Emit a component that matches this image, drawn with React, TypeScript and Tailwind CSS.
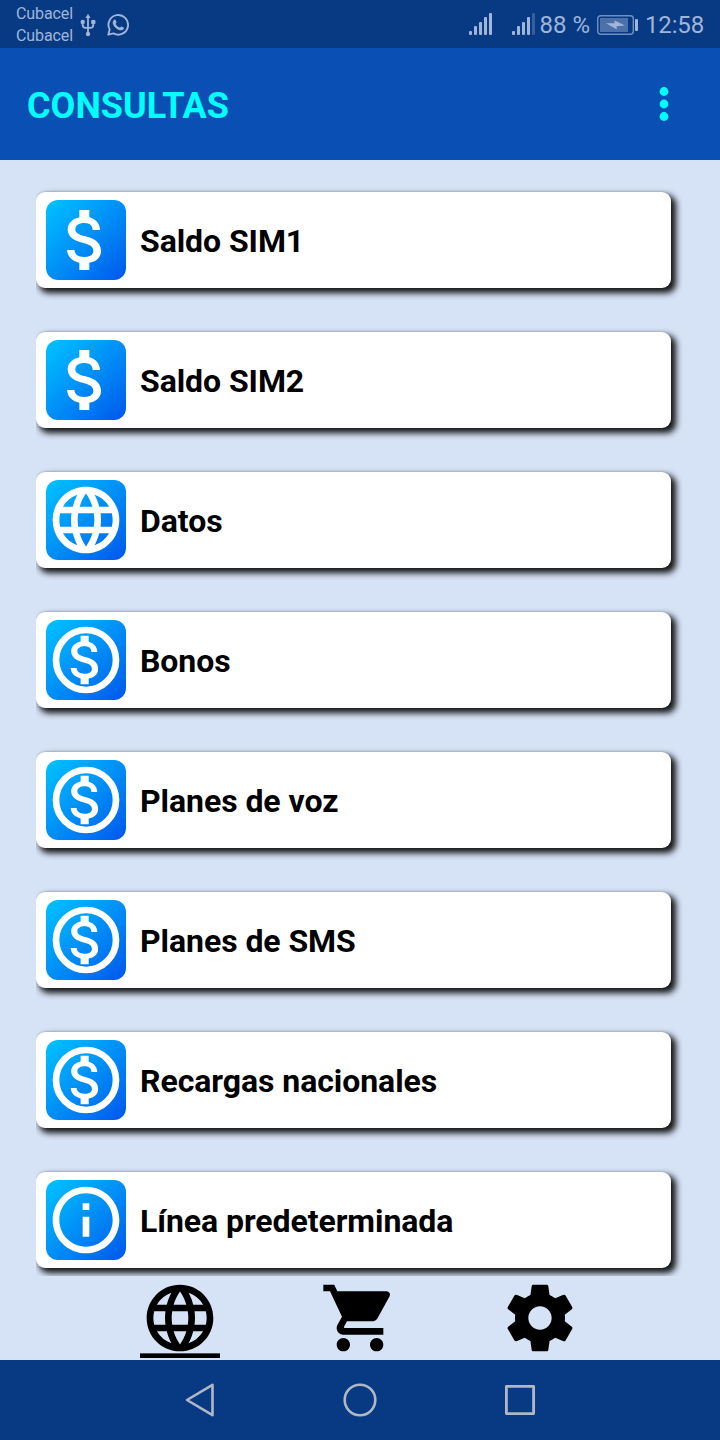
import type { ReactNode } from 'react'
import {
  MdAttachMoney,
  MdLanguage,
  MdOutlineInfo,
  MdShoppingCart
} from 'react-icons/md'

interface IconProps {
  size?: number
}

interface QueryItem {
  label: string
  icon: (props: IconProps) => ReactNode
}

function CoinIcon({ size = 24 }: IconProps) {
  return (
    <svg width={size} height={size} viewBox="0 0 24 24" fill="none" stroke="currentColor">
      <circle cx="12" cy="12" r="9" strokeWidth="2" />
      <svg x="2.300" y="2.300" width="19.400" height="19.400" viewBox="0 0 24 24" stroke="none">
        <MdAttachMoney size={24} />
      </svg>
    </svg>
  )
}

const queries: QueryItem[] = [
  { label: 'Saldo SIM1', icon: MdAttachMoney },
  { label: 'Saldo SIM2', icon: MdAttachMoney },
  { label: 'Datos', icon: MdLanguage },
  { label: 'Bonos', icon: CoinIcon },
  { label: 'Planes de voz', icon: CoinIcon },
  { label: 'Planes de SMS', icon: CoinIcon },
  { label: 'Recargas nacionales', icon: CoinIcon },
  { label: 'Línea predeterminada', icon: MdOutlineInfo }
]

function GearIcon({ size = 24 }: IconProps) {
  return (
    <svg width={size} height={size} viewBox="0 0 24 24" fill="currentColor">
      <path d="M19.43 12.98c.04-.32.07-.64.07-.98s-.03-.66-.07-.98l2.11-1.65c.19-.15.24-.42.12-.64l-2-3.46c-.12-.22-.39-.3-.61-.22l-2.49 1c-.52-.4-1.08-.73-1.69-.98l-.38-2.65C14.46 2.18 14.25 2 14 2h-4c-.25 0-.46.18-.49.42l-.38 2.65c-.61.25-1.17.59-1.69.98l-2.49-1c-.23-.09-.49 0-.61.22l-2 3.46c-.13.22-.07.49.12.64l2.11 1.65c-.04.32-.07.65-.07.98s.03.66.07.98l-2.11 1.65c-.19.15-.24.42-.12.64l2 3.46c.12.22.39.3.61.22l2.49-1c.52.4 1.08.73 1.69.98l.38 2.65c.03.24.24.42.49.42h4c.25 0 .46-.18.49-.42l.38-2.65c.61-.25 1.17-.59 1.69-.98l2.49 1c.23.09.49 0 .61-.22l2-3.46c.12-.22.07-.49-.12-.64l-2.11-1.65zM12 15.5c-1.93 0-3.5-1.57-3.5-3.5s1.57-3.5 3.5-3.5 3.5 1.57 3.5 3.5-1.57 3.5-3.5 3.5z" />
    </svg>
  )
}

function UsbIcon() {
  return (
    <svg width="16" height="24" viewBox="0 0 16 24" fill="none" stroke="currentColor" strokeWidth="1.800">
      <path d="M8 3v18M2.700 9v3c0 2 1.200 2.800 3 2.800h4.600c1.800 0 3-.8 3-2.800V9" />
      <path d="M8 .8 10.600 5H5.400Z" fill="currentColor" stroke="none" />
      <circle cx="2.700" cy="9" r="2.200" fill="currentColor" stroke="none" />
      <rect x="11.200" y="7" width="4.200" height="4" rx=".8" fill="currentColor" stroke="none" />
      <circle cx="8" cy="21" r="2.200" fill="currentColor" stroke="none" />
    </svg>
  )
}

function WhatsappIcon() {
  return (
    <svg width="22" height="22" viewBox="0 0 22 22" fill="none" stroke="currentColor" strokeWidth="1.900">
      <path d="M1.300 20.700 2.700 15.600A9.800 9.800 0 1 1 6.500 19.400Z" strokeLinejoin="round" />
      <path
        d="M7.300 5.800c.5-.4 1-.3 1.300.3l.9 2.100c.2.500-.8 1.300-.8 1.700.9 1.800 2.200 2.900 4 3.700.5.100 1.200-1.400 1.700-1.200l2.200 1.100c.6.300.4 1.200-.1 1.800-.9 1-2.300 1.300-3.700.9-3.500-1.100-5.800-3.400-6.900-6.300-.5-1.500.1-3.200 1.400-4.100Z"
        fill="currentColor"
        stroke="none"
      />
    </svg>
  )
}

function SignalIcon({ weak = false }: { weak?: boolean }) {
  return (
    <svg width="24" height="23" viewBox="0 0 24 23" fill="currentColor">
      <rect x="0" y="18" width="3" height="4" rx="1" />
      <rect x="5" y="13" width="3" height="9" rx="1" />
      <rect x="10" y="9" width="3" height="13" rx="1" />
      <rect x="15" y="4" width="3" height="18" rx="1" />
      <rect x="20" y="0" width="3" height="22" rx="1" opacity={weak ? 0.3 : 1} />
    </svg>
  )
}

function BatteryIcon() {
  return (
    <svg width="42" height="20" viewBox="0 0 42 20" fill="currentColor">
      <rect x=".7" y=".7" width="35.600" height="18.600" rx="3" fill="none" stroke="currentColor" strokeWidth="1.400" opacity=".7" />
      <rect x="3" y="3" width="28" height="14" opacity=".45" />
      <rect x="38" y="4" width="3" height="12" rx="1" />
      <path d="M9 8.200h8.500V5.500l10.500 5-8.500.7.400 3.300Z" />
    </svg>
  )
}

function StatusBar() {
  return (
    <div className="flex h-12 shrink-0 items-center bg-[#083a83] text-[#9fb5d9]">
      <div className="flex w-[64px] flex-col pl-4 pt-[2px] text-[16px] leading-[22px] tracking-[-0.1px]">
        <span>Cubacel</span>
        <span>Cubacel</span>
      </div>
      <div className="ml-4 mt-[2px] flex items-center gap-[11px]">
        <UsbIcon />
        <WhatsappIcon />
      </div>
      <div className="ml-auto mr-4 mt-[1px] flex items-center text-[24px] leading-none">
        <SignalIcon />
        <div className="ml-[19px]">
          <SignalIcon weak />
        </div>
        <span className="ml-[3px]">88 %</span>
        <div className="ml-[7px]">
          <BatteryIcon />
        </div>
        <span className="ml-[6px] tracking-[-0.15px]">12:58</span>
      </div>
    </div>
  )
}

function AppBar() {
  return (
    <header className="flex h-28 shrink-0 items-center justify-between bg-[#0a50b4] pl-[27px] pr-[51px] text-[#00ffff]">
      <h1 className="pt-[4px] text-[36px] font-bold leading-none">CONSULTAS</h1>
      <svg width="10" height="36" viewBox="0 0 10 36" fill="currentColor">
        <circle cx="5" cy="5.500" r="4.400" />
        <circle cx="5" cy="18" r="4.400" />
        <circle cx="5" cy="30.500" r="4.400" />
      </svg>
    </header>
  )
}

function QueryCard({ label, icon: Icon }: QueryItem) {
  return (
    <li className="h-[140px] w-[650px] shrink-0 overflow-hidden pt-8">
      <button className="flex h-24 w-[635px] items-center rounded-[9px] bg-white pl-[10px] text-left shadow-[4px_4px_6px_0.5px_rgba(0,0,0,0.92),0_-1px_1px_rgba(60,80,120,0.12)]">
        <span className="flex size-20 items-center justify-center rounded-[12px] bg-linear-to-br from-[#00c3ff] to-[#0055eb] text-white">
          <Icon size={80} />
        </span>
        <span className="pl-[14px] pt-[2px] text-[32px] font-bold leading-none tracking-[-0.06px] text-black">{label}</span>
      </button>
    </li>
  )
}

function TabBar() {
  return (
    <nav className="flex h-[84px] shrink-0 justify-center gap-[100px] pt-[2px] text-black">
      <button className="relative size-20">
        <MdLanguage size={80} />
        <span className="absolute inset-x-0 bottom-0 h-[5px] border-t border-[#4a5260] bg-black" />
      </button>
      <button className="size-20">
        <MdShoppingCart size={80} />
      </button>
      <button className="size-20">
        <GearIcon size={80} />
      </button>
    </nav>
  )
}

function SystemNav() {
  return (
    <div className="flex h-20 shrink-0 items-center justify-center gap-[120px] bg-[#083a83]">
      <svg width="40" height="40" viewBox="0 0 40 40" fill="none" stroke="#b0b7c5" strokeWidth="2.600" strokeLinejoin="round">
        <path d="M32.500 4.800v30.400L7 20Z" />
      </svg>
      <svg width="40" height="40" viewBox="0 0 40 40" fill="none" stroke="#b0b7c5" strokeWidth="2.600">
        <circle cx="20" cy="20" r="15.300" />
      </svg>
      <svg width="40" height="40" viewBox="0 0 40 40" fill="none" stroke="#b0b7c5" strokeWidth="2.800" strokeLinejoin="round">
        <rect x="6.400" y="6.400" width="27.200" height="27.200" />
      </svg>
    </div>
  )
}

export default function App() {
  return (
    <div className="flex h-[1440px] w-[720px] flex-col overflow-hidden bg-[#d6e2f5] font-['Roboto',sans-serif]">
      <StatusBar />
      <AppBar />
      <ul className="flex h-[1116px] shrink-0 flex-col overflow-hidden pl-9">
        {queries.map((query) => (
          <QueryCard key={query.label} {...query} />
        ))}
      </ul>
      <TabBar />
      <SystemNav />
    </div>
  )
}
